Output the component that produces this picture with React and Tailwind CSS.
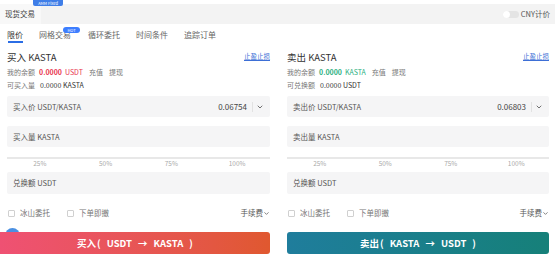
import { ChevronDown } from "lucide-react";

const font = { fontFamily: '"Noto Sans CJK SC", "Noto Sans", sans-serif' };

function Input({ label, value }) {
  return (
    <div className="h-[21px] rounded-[2px] bg-[#f5f5f6] flex items-center pl-[6px] pr-[6px] text-[7.5px] text-[#555]">
      <span className="flex-1">{label}</span>
      {value && (
        <>
          <span className="text-[8px] text-[#444] mr-[5px]">{value}</span>
          <span className="w-px h-[10px] bg-[#e2e2e2] mr-[3px]" />
          <ChevronDown className="w-[8px] h-[8px] text-[#555]" strokeWidth={2.5} />
        </>
      )}
    </div>
  );
}

function Checkbox({ label }) {
  return (
    <div className="flex items-center gap-[5px]">
      <span className="w-[7px] h-[7px] border border-[#d0d0d0] rounded-[1px] bg-white" />
      <span className="text-[7.5px] text-[#777]">{label}</span>
    </div>
  );
}

function Column({ side }) {
  const buy = side === "buy";
  return (
    <div className="relative w-[263px] flex flex-col">
      <div className="h-[14px] flex items-center justify-between">
        <span className="text-[9.5px] text-[#333]">{buy ? "买入 KASTA" : "卖出 KASTA"}</span>
        <span className="text-[6.5px] text-[#3d6fd6] underline">止盈止损</span>
      </div>
      <div className="mt-[2px] h-[12px] flex items-center gap-[4px] text-[7px] text-[#777]">
        <span>我的余额</span>
        <span className={buy ? "text-[#e8364f] font-bold" : "text-[#2cb07f] font-bold"}>0.0000</span>
        <span className={buy ? "text-[#e8364f] -ml-[1px]" : "text-[#2cb07f] -ml-[1px]"}>{buy ? "USDT" : "KASTA"}</span>
        <span className="ml-[2px]">充值</span>
        <span className="ml-[2px]">提现</span>
      </div>
      <div className="mt-px h-[12px] flex items-center gap-[5px] text-[7px] text-[#777]">
        <span>{buy ? "可买入量" : "可兑换额"}</span>
        <span className="text-[#333]">{buy ? "0.0000 KASTA" : "0.0000 USDT"}</span>
      </div>
      <div className="mt-[5px]">
        <Input label={buy ? "买入价 USDT/KASTA" : "卖出价 USDT/KASTA"} value={buy ? "0.06754" : "0.06803"} />
      </div>
      <div className="mt-[9px]">
        <Input label={buy ? "买入量 KASTA" : "卖出量 KASTA"} />
      </div>
      <div className="mt-[10px] h-[2px] bg-[#e8e8e8]" />
      <div className="grid grid-cols-4 h-[10px] items-center text-center text-[6.5px] text-[#aaa]">
        <span>25%</span>
        <span>50%</span>
        <span>75%</span>
        <span>100%</span>
      </div>
      <div className="mt-[3px]">
        <div className="h-[22px] rounded-[2px] bg-[#f5f5f6] flex items-center pl-[6px] text-[7.5px] text-[#555]">兑换额 USDT</div>
      </div>
      <div className="mt-[12px] h-[14px] flex items-center">
        <div className="flex items-center gap-[17px] flex-1 pl-px">
          <Checkbox label="冰山委托" />
          <Checkbox label="下单即撤" />
        </div>
        <div className="flex items-center text-[7.5px] text-[#555]">
          手续费
          <ChevronDown className="w-[7px] h-[7px] text-[#555]" strokeWidth={2.5} />
        </div>
      </div>
      {buy && <div className="absolute left-[-2px] top-[178px] w-[15px] h-[15px] rounded-full bg-[#4a90e2]" />}
      <div
        className={
          buy
            ? "relative mt-[12px] h-[22px] -ml-[7px] w-[270px] rounded-r-[3px] bg-gradient-to-r from-[#ef5173] to-[#e0582f] flex items-center justify-center gap-[6px] text-white text-[9.5px] font-bold"
            : "relative mt-[12px] h-[22px] w-[262px] rounded-[3px] bg-gradient-to-r from-[#1f7d9c] to-[#168079] flex items-center justify-center gap-[6px] text-white text-[9.5px] font-bold"
        }
      >
        <span>{buy ? "买入" : "卖出"}</span>
        <span className="-ml-[5px]">(</span>
        <span>{buy ? "USDT" : "KASTA"}</span>
        <span>→</span>
        <span>{buy ? "KASTA" : "USDT"}</span>
        <span>)</span>
      </div>
    </div>
  );
}

export default function App() {
  return (
    <div className="relative w-[555px] h-[266px] overflow-hidden bg-white" style={font}>
      <div className="h-[4px] bg-white" />
      <div className="absolute left-[33px] top-0 h-[6px] w-[30px] rounded-b-[2px] bg-[#3f7ee8] flex items-center justify-center text-[4px] text-white leading-none">
        AMM Fixed
      </div>
      <div className="h-[20px] bg-[#f3f3f3] flex items-center">
        <div className="h-full w-[41px] bg-[#f8f8f8] flex items-center pl-[5px] text-[7.5px] text-[#444]">现货交易</div>
        <div className="flex-1" />
        <div className="flex items-center gap-[2px] pr-[5px]">
          <span className="w-[16px] h-[7px] rounded-full bg-[#e4e4e4] relative">
            <span className="absolute left-0 top-0 w-[7px] h-[7px] rounded-full bg-white" />
          </span>
          <span className="text-[7.5px] text-[#555]">CNY计价</span>
        </div>
      </div>
      <div className="px-[7px]">
        <div className="relative flex h-[19px] pt-[5px] text-[8px] text-[#666]">
          <div className="w-[16px] flex flex-col items-center">
            <span className="h-[12px] leading-[12px] text-[#333]">限价</span>
            <span className="w-[15px] h-[2px] bg-[#2b6de5]" />
          </div>
          <span className="ml-[16px] h-[12px] leading-[12px] relative">
            网格交易
            <span className="absolute left-[24px] top-[-2px] w-[17px] h-[6px] rounded-full bg-[#3d7eff] text-white text-[4px] leading-[6px] text-center">HOT</span>
          </span>
          <span className="ml-[17px] h-[12px] leading-[12px]">循环委托</span>
          <span className="ml-[16px] h-[12px] leading-[12px]">时间条件</span>
          <span className="ml-[16px] h-[12px] leading-[12px]">追踪订单</span>
        </div>
        <div className="mt-[7px] flex gap-[17px]">
          <Column side="buy" />
          <Column side="sell" />
        </div>
      </div>
    </div>
  );
}
